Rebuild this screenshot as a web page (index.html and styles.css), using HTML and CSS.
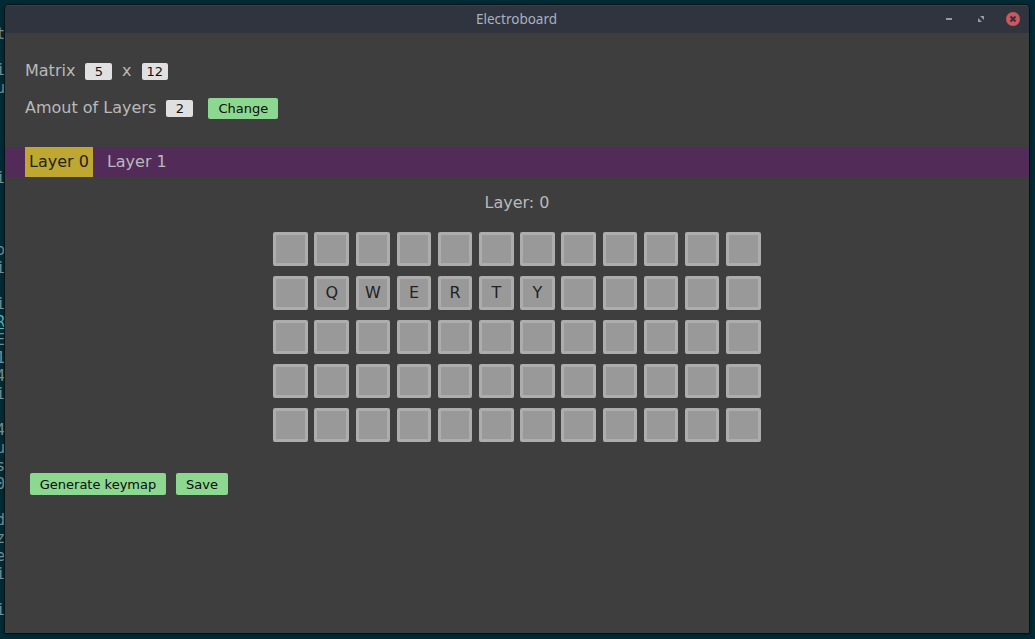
FILE: index.html
```html
<!DOCTYPE html>
<html lang="en">
<head>
<meta charset="utf-8">
<title>Electroboard</title>
<link rel="stylesheet" href="styles.css">
</head>
<body>
<pre class="terminal">t

i
u




i



o
i

i
<span class="link">R</span>
E
1
4
i

4
u
s
0

d
z
e
i

i</pre>
<div class="window">
  <header class="titlebar">
    <span class="title">Electroboard</span>
    <svg class="controls" width="80" height="16" viewBox="0 0 80 16">
      <path d="M2 7h6v2H2z" fill="#969baa"/>
      <path d="M36 5h4v4zM34 7v4h4z" fill="#969baa"/>
      <circle cx="69" cy="8" r="7" fill="#cc575d"/>
      <path d="M66.500 5.500l5 5m0-5l-5 5" stroke="#2f343f" stroke-width="2"/>
    </svg>
  </header>
  <main class="content">
    <div class="row matrix">Matrix <span class="field">5</span><span class="times">x</span><span class="field wide">12</span></div>
    <div class="row layers">Amout of Layers <span class="field">2</span><button class="btn change">Change</button></div>
    <nav class="tabs"><span class="tab active">Layer 0</span><span class="tab">Layer 1</span></nav>
    <div class="heading">Layer: 0</div>
    <div class="keys">
      <i></i><i></i><i></i><i></i><i></i><i></i><i></i><i></i><i></i><i></i><i></i><i></i>
      <i></i><i>Q</i><i>W</i><i>E</i><i>R</i><i>T</i><i>Y</i><i></i><i></i><i></i><i></i><i></i>
      <i></i><i></i><i></i><i></i><i></i><i></i><i></i><i></i><i></i><i></i><i></i><i></i>
      <i></i><i></i><i></i><i></i><i></i><i></i><i></i><i></i><i></i><i></i><i></i><i></i>
      <i></i><i></i><i></i><i></i><i></i><i></i><i></i><i></i><i></i><i></i><i></i><i></i>
    </div>
    <div class="actions"><button class="btn generate">Generate keymap</button><button class="btn save">Save</button></div>
  </main>
</div>
</body>
</html>
```
FILE: styles.css
```css
* { box-sizing: border-box; }
body {
  margin: 0;
  height: 639px;
  display: flex;
  overflow: hidden;
  background: #002b36;
  font-family: "DejaVu Sans", sans-serif;
}
.terminal {
  margin: 0 -1px 0 -4px;
  padding-top: 25px;
  width: 10px;
  flex: none;
  font: 15px/18px "DejaVu Sans Mono", monospace;
  color: #7c9093;
}
.link { color: #4fc0b8; text-decoration: underline; }
.window {
  width: 1024px;
  height: 628px;
  margin-top: 5px;
  flex: none;
  display: flex;
  flex-direction: column;
  position: relative;
  border-radius: 4px 4px 0 0;
  overflow: hidden;
  background: #3e3e3e;
  box-shadow: 0 0 0 1px rgba(4, 16, 20, .8), 0 1px 4px rgba(0, 0, 0, .4);
}
.titlebar {
  height: 28px;
  flex: none;
  display: grid;
  grid-template-columns: 1fr auto 1fr;
  align-items: center;
  background: #2f343f;
  box-shadow: inset 0 1px #3b404a;
}
.title {
  grid-column: 2;
  padding-right: 1px;
  font: 13.5px/28px "Noto Sans", sans-serif;
  color: #a9b1be;
}
.controls { justify-self: end; margin-right: 5px; }
.content {
  display: flex;
  flex-direction: column;
  color: #b9b9b9;
  font-size: 16px;
}
.row { display: flex; align-items: center; margin-left: 20px; height: 22px; }
.matrix { margin-top: 26px; }
.layers { margin-top: 15px; }
.field {
  width: 27px;
  height: 17px;
  margin: 3px 0 0 10px;
  border-radius: 2px;
  background: #e0e0e0;
  color: #111;
  font-size: 13px;
  line-height: 18px;
  text-align: center;
}
.field.wide { width: 26px; }
.times { margin-left: 9.5px; margin-right: .5px; }
.btn {
  height: 22px;
  padding: 1px 0 0;
  border: 0;
  border-radius: 2px;
  background: #8dd891;
  color: #0a0a0a;
  font: 13px/21px "DejaVu Sans", sans-serif;
}
.change { width: 70px; margin: 2px 0 0 15px; height: 21px; padding: 0; line-height: 21px; }
.generate { width: 136px; }
.save { width: 52px; }
.tabs {
  display: flex;
  gap: 10px;
  height: 30px;
  margin-top: 29px;
  padding-left: 20px;
  background: #522b59;
}
.tab { padding: 0 4px; line-height: 29px; }
.tab.active { background: #bfa832; color: #222; }
.heading { margin-top: 16px; line-height: 19px; text-align: center; }
.keys {
  display: grid;
  grid-template-columns: repeat(12, 34.6px);
  gap: 10px 6.57px;
  margin: 20px 0 0 268.25px;
}
.keys i {
  height: 34px;
  border: 3px solid #adadad;
  border-radius: 2px;
  background: #999;
  color: #222;
  font-style: normal;
  line-height: 27px;
  text-align: center;
}
.actions { display: flex; gap: 10px; margin: 31px 0 0 25px; }
```
